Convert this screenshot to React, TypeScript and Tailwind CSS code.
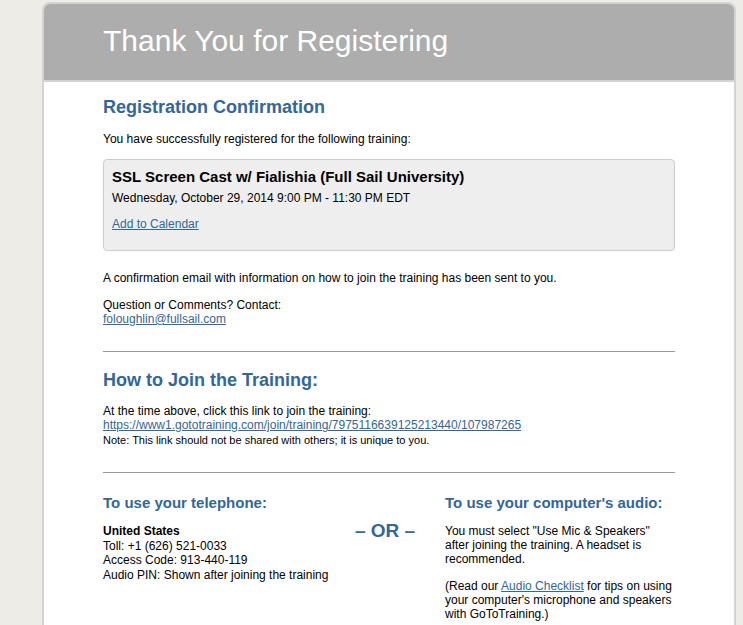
import React from "react";

const blue = "text-[#336699]";
const link = "text-[#336699] underline";

const App = () => {
  return (
    <div className="min-h-[700px] bg-[#edece6] pt-[2px] font-['Liberation_Sans',Arial,sans-serif] text-black">
      <div className="ml-[42px] w-[694px] border-2 border-[#d3d3d3] rounded-t-[8px] bg-white overflow-hidden">
        <div className="h-[78px] bg-[#adadad] border-b-2 border-[#d3d3d3] pl-[59px] pt-[20px]">
          <h1 className="text-[30px] leading-[34px] text-white">Thank You for Registering</h1>
        </div>

        <div className="px-[59px] pt-[14px] pb-[40px]">
          <h2 className={`text-[18px] leading-[22px] font-bold ${blue}`}>Registration Confirmation</h2>
          <p className="mt-[14px] text-[12px] leading-[14px]">
            You have successfully registered for the following training:
          </p>

          <div className="mt-[13px] h-[92px] rounded-[4px] border border-[#cccccc] bg-[#eeeeee] pl-[8px] pt-[8px]">
            <div className="text-[15px] leading-[18px] font-bold">
              SSL Screen Cast w/ Fialishia (Full Sail University)
            </div>
            <div className="mt-[5px] text-[12px] leading-[14px]">
              Wednesday, October 29, 2014 9:00 PM - 11:30 PM EDT
            </div>
            <a href="#" className={`mt-[12px] inline-block text-[12px] leading-[14px] ${link}`}>
              Add to Calendar
            </a>
          </div>

          <p className="mt-[20px] text-[12px] leading-[14px]">
            A confirmation email with information on how to join the training has been sent to you.
          </p>
          <div className="mt-[13px] text-[12px]">
            <div className="leading-[14px]">Question or Comments? Contact:</div>
            <a href="#" className={`block leading-[15px] ${link}`}>
              foloughlin@fullsail.com
            </a>
          </div>

          <div className="mt-[24px] h-px bg-[#999999]" />

          <h2 className={`mt-[17px] text-[18px] leading-[22px] font-bold ${blue}`}>How to Join the Training:</h2>
          <div className="mt-[13px] text-[12px] leading-[14px]">
            <div>At the time above, click this link to join the training:</div>
            <a href="#" className={link}>
              https://www1.gototraining.com/join/training/7975116639125213440/107987265
            </a>
            <div className="text-[11px] leading-[16px]">
              Note: This link should not be shared with others; it is unique to you.
            </div>
          </div>

          <div className="mt-[24px] h-px bg-[#999999]" />

          <div className="mt-[21px] grid grid-cols-[242px_100px_230px] gap-y-[12px]">
            <h3 className={`text-[15px] leading-[18px] font-bold ${blue}`}>To use your telephone:</h3>
            <div />
            <h3 className={`text-[15px] leading-[18px] font-bold whitespace-nowrap ${blue}`}>
              To use your computer's audio:
            </h3>

            <div className="text-[12px] leading-[14.6px] whitespace-nowrap">
              <div className="font-bold">United States</div>
              <div>Toll: +1 (626) 521-0033</div>
              <div>Access Code: 913-440-119</div>
              <div>Audio PIN: Shown after joining the training</div>
            </div>
            <div className={`pl-[10px] text-[19px] leading-[14px] font-bold whitespace-nowrap ${blue}`}>– OR –</div>
            <div className="text-[12px] leading-[14px] whitespace-nowrap">
              <p>
                You must select "Use Mic &amp; Speakers"
                <br />
                after joining the training. A headset is
                <br />
                recommended.
              </p>
              <p className="mt-[13px]">
                (Read our{" "}
                <a href="#" className={link}>
                  Audio Checklist
                </a>{" "}
                for tips on using
                <br />
                your computer's microphone and speakers
                <br />
                with GoToTraining.)
              </p>
            </div>
          </div>
        </div>
      </div>
    </div>
  );
};

export default App;
